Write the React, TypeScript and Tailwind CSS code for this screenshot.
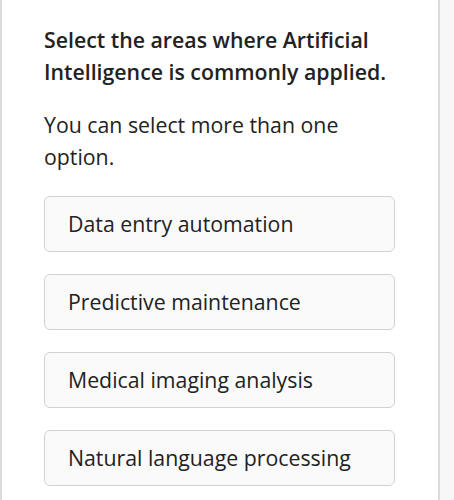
const options = [
  "Data entry automation",
  "Predictive maintenance",
  "Medical imaging analysis",
  "Natural language processing",
];

export default function App() {
  return (
    <div
      className="flex h-[500px] w-[454px] overflow-hidden bg-[#f7f7f7] text-[#222222]"
      style={{ fontFamily: '"Open Sans", sans-serif' }}
    >
      <div className="w-[440px] shrink-0 border-x-2 border-[#dcdcdc] bg-white pt-[24px] pl-[42px] pr-[40px]">
        <h2 className="text-[21.3px] font-semibold leading-[32px]">
          Select the areas where Artificial Intelligence is commonly applied.
        </h2>

        <p className="mt-[21px] pr-[40px] text-[21.3px] leading-[32px]">
          You can select more than one option.
        </p>

        <div className="mt-[23px] flex flex-col gap-[22px]">
          {options.map((label) => (
            <button
              key={label}
              className="flex h-[56px] w-[351px] items-center rounded-[6px] border border-[#d2d2d2] bg-[#fafafa] px-[23px] text-left text-[21.3px] leading-[28px] text-[#222222]"
            >
              {label}
            </button>
          ))}
        </div>
      </div>
    </div>
  );
}
